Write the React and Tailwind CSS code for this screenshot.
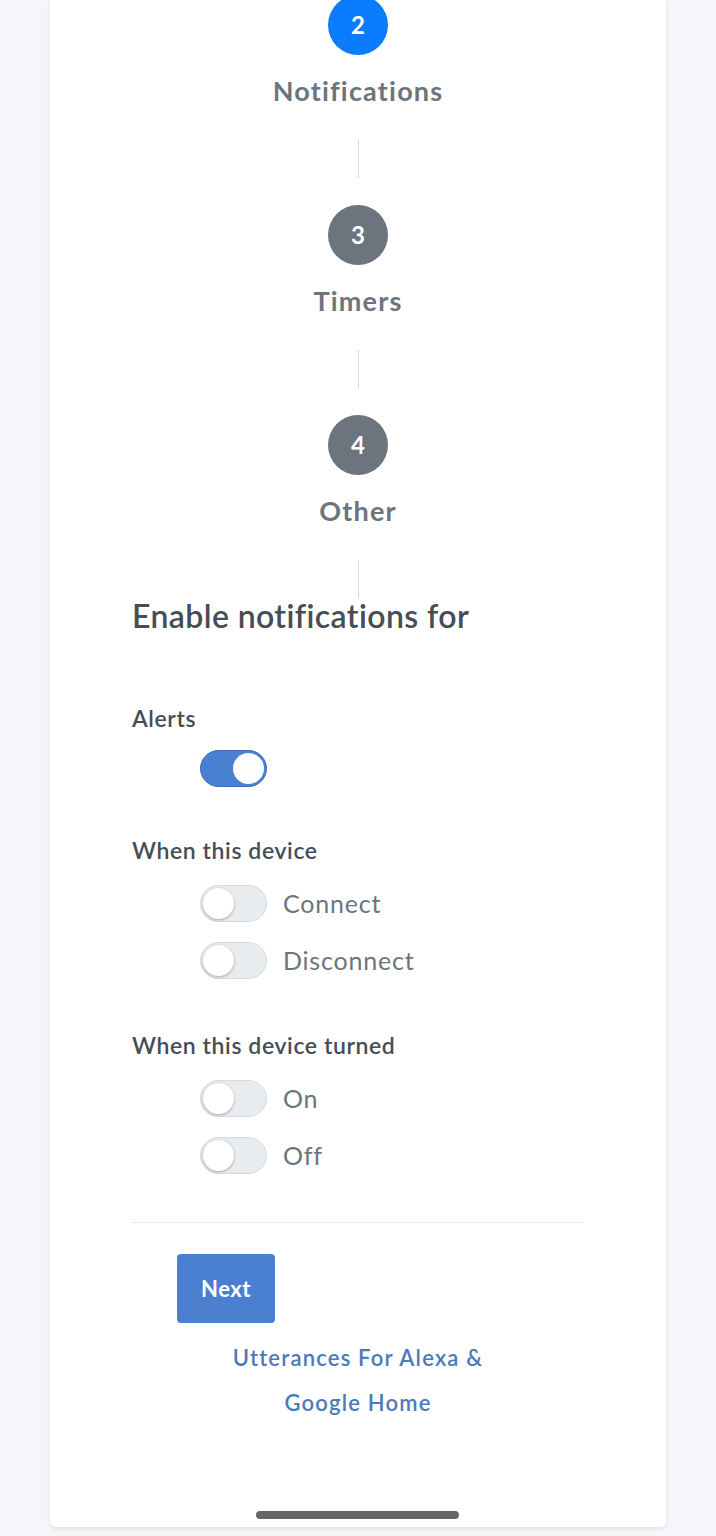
const steps = [
  { n: 2, label: 'Notifications', active: true },
  { n: 3, label: 'Timers' },
  { n: 4, label: 'Other' },
]

function Toggle({ on }) {
  return (
    <div
      className={
        'relative h-[37px] w-[67px] shrink-0 rounded-full border ' +
        (on ? 'bg-[#4a80d1] border-[#3d6db5]' : 'bg-[#e9ecef] border-[#d6dadf]')
      }
    >
      <div
        className={
          'absolute top-[2px] h-[31px] w-[31px] rounded-full bg-white ' +
          (on ? 'left-[32px]' : 'left-[2px] shadow-[0_1px_3px_rgba(0,0,0,0.3)]')
        }
      />
    </div>
  )
}

function Option({ label }) {
  return (
    <div className="flex h-[37px] items-center gap-4 pl-[68px]">
      <Toggle />
      <span className="text-[25px] leading-[37px] tracking-[0.8px] text-[#6c757d]">{label}</span>
    </div>
  )
}

export default function App() {
  return (
    <div className="min-h-[1536px] bg-[#f4f6fa] font-['Lato',sans-serif]">
      <div className="mx-[50px] bg-white rounded-b-md shadow-[0_2px_4px_rgba(0,0,0,0.08)] h-[1527px] overflow-hidden">
        <div className="-mt-[5px] px-[82px] flex flex-col">
          {steps.map((s) => (
            <div key={s.n} className="flex flex-col items-center">
              <div
                className={
                  'h-[60px] w-[60px] rounded-full flex items-center justify-center text-white text-[24px] font-bold ' +
                  (s.active ? 'bg-[#0b7cfd]' : 'bg-[#6c757d]')
                }
              >
                {s.n}
              </div>
              <div className="mt-[18px] h-[36px] leading-[36px] text-[27px] tracking-[1.2px] font-bold text-[#6c757d]">
                {s.label}
              </div>
              <div className="mt-[31px] h-[38px] w-px bg-[#d5d8dc]" />
              {s.n !== 4 && <div className="h-[27px]" />}
            </div>
          ))}
          <h2 className="-mt-[1px] text-[32px] leading-[38px] tracking-[0.4px] font-semibold text-[#454d55]">
            Enable notifications for
          </h2>

          <div className="mt-[68px] text-[23px] leading-[30px] tracking-[0.6px] font-semibold text-[#454d55]">Alerts</div>
          <div className="mt-[17px] pl-[68px]">
            <Toggle on />
          </div>

          <div className="mt-[48px] text-[23px] leading-[30px] tracking-[0.6px] font-semibold text-[#454d55]">When this device</div>
          <div className="mt-[20px] flex flex-col gap-[20px]">
            <Option label="Connect" />
            <Option label="Disconnect" />
          </div>

          <div className="mt-[51px] text-[23px] leading-[30px] tracking-[0.6px] font-semibold text-[#454d55]">When this device turned</div>
          <div className="mt-[20px] flex flex-col gap-[20px]">
            <Option label="On" />
            <Option label="Off" />
          </div>

          <div className="mt-[48px] h-px bg-[#e6e8eb]" />

          <div className="mt-[31px] pl-[45px]">
            <button className="h-[69px] w-[98px] rounded-[4px] bg-[#4a7fd0] text-white text-[22px] tracking-[0.5px] font-bold">
              Next
            </button>
          </div>

          <div className="mt-[12px] text-center text-[22px] leading-[45px] font-semibold tracking-[1.2px] text-[#4a7ab9]">
            Utterances For Alexa &amp;
            <br />
            Google Home
          </div>
        </div>
      </div>
      <div className="fixed left-[256px] top-[1511px] h-[8px] w-[203px] rounded-full bg-[#666]" />
    </div>
  )
}
